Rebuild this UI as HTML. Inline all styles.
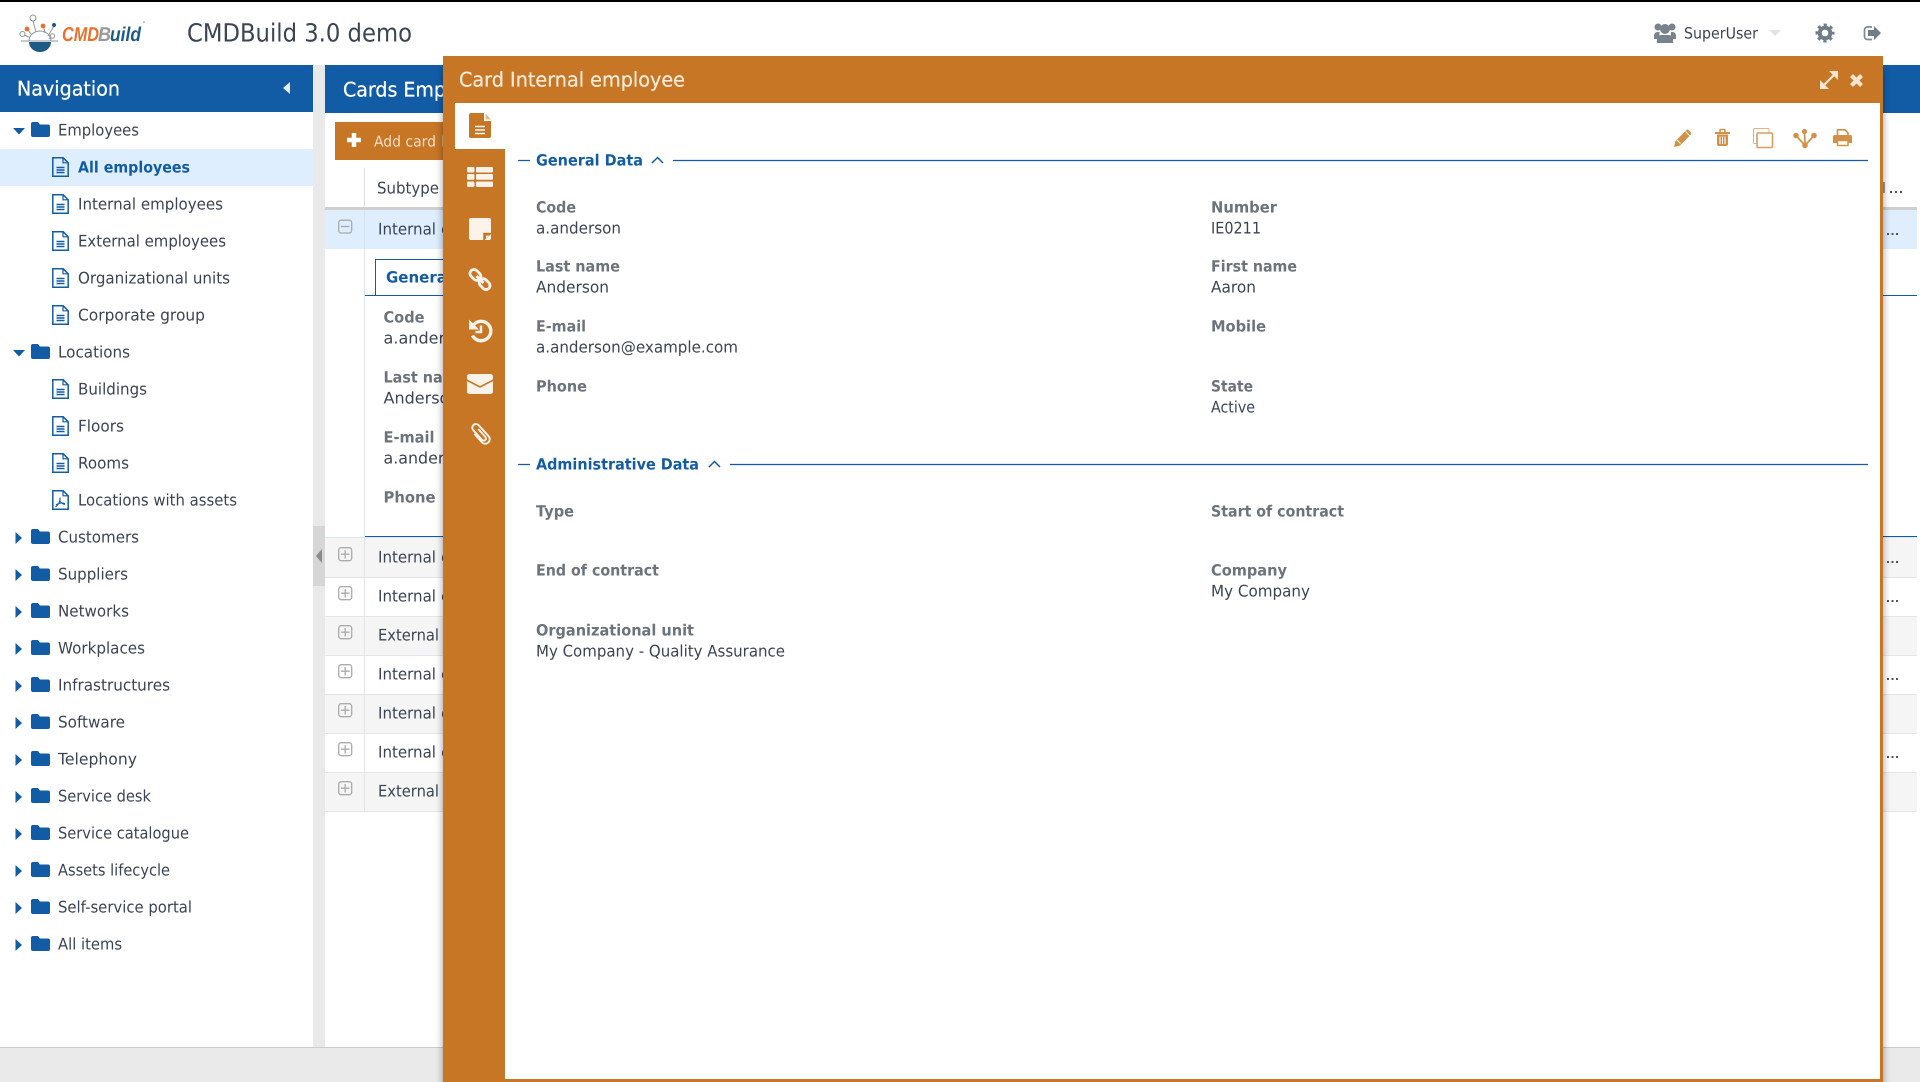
<!DOCTYPE html>
<html lang="en">
<head>
<meta charset="utf-8">
<title>CMDBuild 3.0 demo</title>
<style>
html,body{margin:0;padding:0;background:#fff;width:1920px;height:1082px;overflow:hidden}
svg{display:block}
text{font-family:"DejaVu Sans","Liberation Sans",sans-serif;text-rendering:geometricPrecision;white-space:pre;transform:translateY(-.7px)}
.n{font-size:16px;fill:#3b4452}
.b{font-size:15.5px;font-weight:700;fill:#6c737b}
.v{font-size:16px;fill:#3b4452}
.h{font-size:15.5px;font-weight:700;fill:#125ca5}
.t{font-size:20px;stroke-width:.25px}
</style>
</head>
<body>
<svg xmlns="http://www.w3.org/2000/svg" width="1920" height="1082" viewBox="0 0 1920 1082">
<defs>
<path id="folder" d="M0 2a2 2 0 0 1 2-2h5l2 2.5h8a2 2 0 0 1 2 2V13a2 2 0 0 1-2 2H2a2 2 0 0 1-2-2z" fill="#125ca5"/>
<g id="file" fill="none" stroke="#125ca5"><path d="M.8.8h10.4l5 5V19.2H.8z" stroke-width="1.5"/><path d="M11 .8v5h5" stroke-width="1.2"/><path d="M4.5 10.5h8M4.5 13h8M4.5 15.5h8" stroke-width="1.4"/></g>
<g id="pdf" fill="none" stroke="#125ca5"><path d="M.8.8h10.4l5 5V19.2H.8z" stroke-width="1.5"/><path d="M11 .8v5h5" stroke-width="1.2"/><path d="M8 7.5c.5 4-1.500 7-4.500 9.500M8 11c1 2 2.500 3 5 3.500M4 15c3-2 6-2.500 9-1.500" stroke-width="1.1"/></g>
<path id="tr" d="M0 0l6.500 6-6.500 6z" fill="#125ca5"/>
<g id="plus" fill="none" stroke="#aaa" stroke-width="1.3"><rect x=".7" y=".7" width="13" height="13" rx="2.500"/><path d="M3 7.200h8.500M7.200 3v8.500"/></g>
<filter id="sh" x="-2%" y="-2%" width="104%" height="104%"><feGaussianBlur stdDeviation="4"/></filter>
</defs>

<rect width="1920" height="1082" fill="#fff"/>
<rect width="1920" height="2" fill="#000"/>

<!-- logo -->
<g fill="none" stroke="#8e959b" stroke-width="1">
<path d="M21 41H58"/>
<path d="M36 32L33 21M31 34L28 30M29 37L24 35M45 33L44 28M48 36L54 26M49 39L51 37"/>
<circle cx="33" cy="18" r="3"/><circle cx="22.500" cy="34" r="2.500"/><circle cx="52.500" cy="36" r="2.200"/>
<path d="M29 41a11 10 0 0 1 22 0"/>
</g>
<path d="M29 42h22a11 10 0 0 1-22 0z" fill="#1d5a85"/>
<circle cx="27" cy="29" r="2.400" fill="#e8712e"/><circle cx="43" cy="26" r="2.400" fill="#e8712e"/><circle cx="54" cy="25" r="2" fill="#1d5a85"/>
<text x="62" y="41.700" textLength="37" lengthAdjust="spacingAndGlyphs" style="font-family:'Liberation Sans',sans-serif;font-size:20px;font-weight:700;font-style:italic;fill:#e8712e">CMD</text>
<text x="98" y="41.700" textLength="13" lengthAdjust="spacingAndGlyphs" style="font-family:'Liberation Sans',sans-serif;font-size:20px;font-weight:700;font-style:italic;fill:#999">B</text>
<text x="110" y="41.700" textLength="31" lengthAdjust="spacingAndGlyphs" style="font-family:'Liberation Sans',sans-serif;font-size:20px;font-weight:700;font-style:italic;fill:#1d5a85">uild</text>
<circle cx="144" cy="22" r="1" fill="#9fb6c6"/>

<text x="187" y="42" textLength="225" lengthAdjust="spacingAndGlyphs" style="font-size:25px;fill:#3b4452">CMDBuild 3.0 demo</text>

<!-- top-right -->
<g fill="#78838e">
<circle cx="1658" cy="27" r="3.500"/><circle cx="1672" cy="27" r="3.500"/>
<path d="M1654 39v-3.500a3.500 3.500 0 0 1 3.500-3.500h2v7zM1671 32h1.500a3.500 3.500 0 0 1 3.500 3.500V39h-5z"/>
<circle cx="1665" cy="29" r="5"/>
<path d="M1657 43v-5a5 5 0 0 1 5-3h6a5 5 0 0 1 5 3v5z"/>
</g>
<text x="1684" y="39" textLength="74" lengthAdjust="spacingAndGlyphs" class="n" style="font-size:15.500px">SuperUser</text>
<path d="M1769 30h12l-6 6z" fill="#e3e3e3"/>
<g fill="none" stroke="#6f7c89"><circle cx="1825" cy="33" r="5.300" stroke-width="4"/><circle cx="1825" cy="33" r="8" stroke-width="3" stroke-dasharray="3.100 3.183" stroke-dashoffset="1.550"/></g>
<path d="M1872 27h-4.500a3 3 0 0 0-3 3v6.500a3 3 0 0 0 3 3h4.500" fill="none" stroke="#7f8a95" stroke-width="1.700"/>
<path d="M1868 30h6v-4l7 7-7 7v-4h-6z" fill="#6f7c89"/>

<!-- gutter / footer -->
<rect x="313" y="65" width="12" height="982" fill="#e9e9e9"/>
<rect x="313" y="526" width="12" height="60" fill="#d6d6d6"/>
<path d="M322 549v14l-6-7z" fill="#8a8a8a"/>
<rect y="1047" width="1920" height="35" fill="#eaeaea"/>
<rect y="1047" width="1920" height="1" fill="#ccc"/>

<!-- navigation -->
<rect y="65" width="313" height="47" fill="#125ca5"/>
<text class="t" x="17" y="96" textLength="103" lengthAdjust="spacingAndGlyphs" style="fill:#fff;stroke:#fff">Navigation</text>
<path d="M290 82v12l-7-6z" fill="#e4edf6"/>
<rect y="149" width="313" height="37" fill="#deeeff"/>

<path d="M13 128h12l-6 6.500z" fill="#125ca5"/>
<use href="#folder" x="31" y="122"/>
<text class="n" x="58" y="136" textLength="81" lengthAdjust="spacingAndGlyphs">Employees</text>
<use href="#file" x="52" y="157"/>
<text x="78" y="173" textLength="112" lengthAdjust="spacingAndGlyphs" style="font-size:15.500px;font-weight:700;fill:#125ca5">All employees</text>
<use href="#file" x="52" y="194"/>
<text class="n" x="78" y="210" textLength="145" lengthAdjust="spacingAndGlyphs">Internal employees</text>
<use href="#file" x="52" y="231"/>
<text class="n" x="78" y="247" textLength="148" lengthAdjust="spacingAndGlyphs">External employees</text>
<use href="#file" x="52" y="268"/>
<text class="n" x="78" y="284" textLength="152" lengthAdjust="spacingAndGlyphs">Organizational units</text>
<use href="#file" x="52" y="305"/>
<text class="n" x="78" y="321" textLength="127" lengthAdjust="spacingAndGlyphs">Corporate group</text>
<path d="M13 350h12l-6 6.500z" fill="#125ca5"/>
<use href="#folder" x="31" y="344"/>
<text class="n" x="58" y="358" textLength="72" lengthAdjust="spacingAndGlyphs">Locations</text>
<use href="#file" x="52" y="379"/>
<text class="n" x="78" y="395" textLength="69" lengthAdjust="spacingAndGlyphs">Buildings</text>
<use href="#file" x="52" y="416"/>
<text class="n" x="78" y="432" textLength="46" lengthAdjust="spacingAndGlyphs">Floors</text>
<use href="#file" x="52" y="453"/>
<text class="n" x="78" y="469" textLength="51" lengthAdjust="spacingAndGlyphs">Rooms</text>
<use href="#pdf" x="52" y="490"/>
<text class="n" x="78" y="506" textLength="159" lengthAdjust="spacingAndGlyphs">Locations with assets</text>

<use href="#tr" x="15.500" y="532"/><use href="#folder" x="31" y="529"/>
<text class="n" x="58" y="543" textLength="81" lengthAdjust="spacingAndGlyphs">Customers</text>
<use href="#tr" x="15.500" y="569"/><use href="#folder" x="31" y="566"/>
<text class="n" x="58" y="580" textLength="70" lengthAdjust="spacingAndGlyphs">Suppliers</text>
<use href="#tr" x="15.500" y="606"/><use href="#folder" x="31" y="603"/>
<text class="n" x="58" y="617" textLength="71" lengthAdjust="spacingAndGlyphs">Networks</text>
<use href="#tr" x="15.500" y="643"/><use href="#folder" x="31" y="640"/>
<text class="n" x="58" y="654" textLength="87" lengthAdjust="spacingAndGlyphs">Workplaces</text>
<use href="#tr" x="15.500" y="680"/><use href="#folder" x="31" y="677"/>
<text class="n" x="58" y="691" textLength="112" lengthAdjust="spacingAndGlyphs">Infrastructures</text>
<use href="#tr" x="15.500" y="717"/><use href="#folder" x="31" y="714"/>
<text class="n" x="58" y="728" textLength="67" lengthAdjust="spacingAndGlyphs">Software</text>
<use href="#tr" x="15.500" y="754"/><use href="#folder" x="31" y="751"/>
<text class="n" x="58" y="765" textLength="79" lengthAdjust="spacingAndGlyphs">Telephony</text>
<use href="#tr" x="15.500" y="791"/><use href="#folder" x="31" y="788"/>
<text class="n" x="58" y="802" textLength="93" lengthAdjust="spacingAndGlyphs">Service desk</text>
<use href="#tr" x="15.500" y="828"/><use href="#folder" x="31" y="825"/>
<text class="n" x="58" y="839" textLength="131" lengthAdjust="spacingAndGlyphs">Service catalogue</text>
<use href="#tr" x="15.500" y="865"/><use href="#folder" x="31" y="862"/>
<text class="n" x="58" y="876" textLength="112" lengthAdjust="spacingAndGlyphs">Assets lifecycle</text>
<use href="#tr" x="15.500" y="902"/><use href="#folder" x="31" y="899"/>
<text class="n" x="58" y="913" textLength="134" lengthAdjust="spacingAndGlyphs">Self-service portal</text>
<use href="#tr" x="15.500" y="939"/><use href="#folder" x="31" y="936"/>
<text class="n" x="58" y="950" textLength="64" lengthAdjust="spacingAndGlyphs">All items</text>

<!-- cards panel (behind modal) -->
<rect x="325" y="65" width="1595" height="48" fill="#125ca5"/>
<text class="t" x="343" y="97" textLength="103" lengthAdjust="spacingAndGlyphs" style="fill:#fff;stroke:#fff">Cards Emp</text>
<rect x="335" y="122" width="120" height="38" fill="#c77625"/>
<path d="M354 133v14M347 140h14" stroke="#fff" stroke-width="4.500" fill="none"/>
<text x="374" y="147" textLength="62" lengthAdjust="spacingAndGlyphs" style="font-size:15px;fill:#f6dfc6">Add card</text>
<text x="441" y="147" style="font-size:15px;fill:#f6dfc6">I</text>
<rect x="364" y="168" width="1" height="39" fill="#ddd"/>
<text class="n" x="377" y="194" textLength="62" lengthAdjust="spacingAndGlyphs">Subtype</text>
<rect x="325" y="207" width="1592" height="3" fill="#cfcfcf"/>
<rect x="325" y="210" width="1592" height="39" fill="#deeeff"/>
<rect x="364" y="249" width="1" height="287" fill="#e5e5e5"/>
<rect x="364" y="210" width="1" height="39" fill="#d5e2ef"/>
<g fill="none" stroke="#aaa" stroke-width="1.300"><rect x="338.700" y="220.200" width="13" height="12.800" rx="2.500"/><path d="M341 226.500h8.500"/></g>
<text class="n" x="378" y="235" textLength="58" lengthAdjust="spacingAndGlyphs">Internal</text><text class="n" x="441" y="235">e</text>
<rect x="365" y="295" width="1552" height="1" fill="#125ca5"/>
<path d="M375.500 295V259.500H450" fill="none" stroke="#125ca5"/>
<text class="h" x="386" y="283" textLength="66" lengthAdjust="spacingAndGlyphs">General</text>
<text class="b" x="383.500" y="323" textLength="41" lengthAdjust="spacingAndGlyphs">Code</text>
<text class="v" x="383.500" y="344" textLength="90" lengthAdjust="spacingAndGlyphs">a.anderson</text>
<text class="b" x="383.500" y="383" textLength="84" lengthAdjust="spacingAndGlyphs">Last name</text>
<text class="v" x="383.500" y="404" textLength="76" lengthAdjust="spacingAndGlyphs">Anderson</text>
<text class="b" x="383.500" y="443" textLength="51" lengthAdjust="spacingAndGlyphs">E-mail</text>
<text class="v" x="383.500" y="464" textLength="212" lengthAdjust="spacingAndGlyphs">a.anderson@example.com</text>
<text class="b" x="383.500" y="503" textLength="52" lengthAdjust="spacingAndGlyphs">Phone</text>
<rect x="365" y="536" width="1552" height="1" fill="#125ca5"/>
<rect x="325" y="537" width="1592" height="1" fill="#d8e8f5"/>

<rect x="325" y="538" width="1592" height="39" fill="#f5f5f5"/>
<rect x="325" y="616" width="1592" height="39" fill="#f5f5f5"/>
<rect x="325" y="694" width="1592" height="39" fill="#f5f5f5"/>
<rect x="325" y="772" width="1592" height="39" fill="#f5f5f5"/>
<g fill="#e5e5e5">
<rect x="325" y="577" width="1592" height="1"/><rect x="325" y="616" width="1592" height="1"/><rect x="325" y="655" width="1592" height="1"/><rect x="325" y="694" width="1592" height="1"/><rect x="325" y="733" width="1592" height="1"/><rect x="325" y="772" width="1592" height="1"/><rect x="325" y="811" width="1592" height="1"/>
<rect x="364" y="538" width="1" height="273"/>
</g>
<use href="#plus" x="338" y="547"/><use href="#plus" x="338" y="586"/><use href="#plus" x="338" y="625"/><use href="#plus" x="338" y="664"/><use href="#plus" x="338" y="703"/><use href="#plus" x="338" y="742"/><use href="#plus" x="338" y="781"/>
<text class="n" x="378" y="563" textLength="58" lengthAdjust="spacingAndGlyphs">Internal</text><text class="n" x="441" y="563">e</text>
<text class="n" x="378" y="602" textLength="58" lengthAdjust="spacingAndGlyphs">Internal</text><text class="n" x="441" y="602">e</text>
<text class="n" x="378" y="641" textLength="61" lengthAdjust="spacingAndGlyphs">External</text>
<text class="n" x="378" y="680" textLength="58" lengthAdjust="spacingAndGlyphs">Internal</text><text class="n" x="441" y="680">e</text>
<text class="n" x="378" y="719" textLength="58" lengthAdjust="spacingAndGlyphs">Internal</text><text class="n" x="441" y="719">e</text>
<text class="n" x="378" y="758" textLength="58" lengthAdjust="spacingAndGlyphs">Internal</text><text class="n" x="441" y="758">e</text>
<text class="n" x="378" y="797" textLength="61" lengthAdjust="spacingAndGlyphs">External</text>

<!-- right-edge dots -->
<g fill="#555">
<rect x="1890" y="191" width="2" height="2"/><rect x="1895" y="191" width="2" height="2"/><rect x="1900" y="191" width="2" height="2"/>
<rect x="1887" y="233" width="2" height="2"/><rect x="1891.500" y="233" width="2" height="2"/><rect x="1896" y="233" width="2" height="2"/>
<rect x="1887" y="561" width="2" height="2"/><rect x="1891.500" y="561" width="2" height="2"/><rect x="1896" y="561" width="2" height="2"/>
<rect x="1887" y="600" width="2" height="2"/><rect x="1891.500" y="600" width="2" height="2"/><rect x="1896" y="600" width="2" height="2"/>
<rect x="1887" y="678" width="2" height="2"/><rect x="1891.500" y="678" width="2" height="2"/><rect x="1896" y="678" width="2" height="2"/>
<rect x="1887" y="756" width="2" height="2"/><rect x="1891.500" y="756" width="2" height="2"/><rect x="1896" y="756" width="2" height="2"/>
</g>
<rect x="1883" y="182" width="2" height="11" fill="#999"/>

<!-- modal -->
<rect x="443" y="70" width="1440" height="1040" fill="#000" opacity=".4" filter="url(#sh)"/>
<rect x="443" y="56" width="1440" height="1026" fill="#c77625"/>
<rect x="505" y="103" width="1375" height="976" fill="#fff"/>
<rect x="455" y="103" width="50" height="46" fill="#fff"/>
<text class="t" x="459" y="87" textLength="226" lengthAdjust="spacingAndGlyphs" style="fill:#f9ead9;stroke:#f9ead9">Card Internal employee</text>

<!-- modal title icons -->
<g fill="#f8e6d2">
<path d="M1829 71h9v9z"/><path d="M1820 80v9h9z"/>
</g>
<path d="M1824 85l10-10" stroke="#f8e6d2" stroke-width="2.200" fill="none"/>
<path d="M1851.500 75.500l10 10M1861.500 75.500l-10 10" stroke="#f8e6d2" stroke-width="4.200" fill="none"/>

<!-- tab icons -->
<path d="M469 115a2 2 0 0 1 2-2h13v8h7v15a2 2 0 0 1-2 2h-18a2 2 0 0 1-2-2z" fill="#c77625"/>
<path d="M485.500 113.500l5.500 6h-5.500z" fill="#e6b885"/>
<path d="M475 126.500h10M475 130h10M475 133.500h10" stroke="#fff" stroke-width="1.500" fill="none"/>
<g fill="#fbf3ea">
<rect x="467" y="167" width="7.500" height="5.500" rx="1.200"/><rect x="476" y="167" width="17" height="5.500" rx="1.200"/>
<rect x="467" y="174" width="7.500" height="5.800" rx="1.200"/><rect x="476" y="174" width="17" height="5.800" rx="1.200"/>
<rect x="467" y="181.500" width="7.500" height="5.500" rx="1.200"/><rect x="476" y="181.500" width="17" height="5.500" rx="1.200"/>
<path d="M469 220a2 2 0 0 1 2-2h18a2 2 0 0 1 2 2v18a2 2 0 0 1-2 2h-18a2 2 0 0 1-2-2z"/>
<path d="M467 376.500a2.500 2.500 0 0 1 2.500-2.500h21a2.500 2.500 0 0 1 2.500 2.500v15a2.500 2.500 0 0 1-2.500 2.500h-21a2.500 2.500 0 0 1-2.500-2.500z"/>
<path d="M469 319.500v10h10z"/>
</g>
<path d="M484 240.500v-7h7.500" fill="#c77625" stroke="#c77625" stroke-width="1.500"/>
<path d="M486 238.500v-3h3z" fill="#fbf3ea"/>
<path d="M466.500 380l13.500 7 13.500-7" fill="none" stroke="#c77625" stroke-width="1.600"/>
<g fill="none" stroke="#fbf3ea">
<g transform="translate(480 279.500) rotate(45)" stroke-width="2.800"><rect x="-12.500" y="-4" width="12" height="8" rx="4"/><rect x=".5" y="-4" width="12" height="8" rx="4"/><path d="M-5 0H5"/></g>
<path d="M473.500 325a9.700 9.700 0 1 1-1 10.500" stroke-width="3.400"/>
<path d="M481 325.500v6.500h-5.500" stroke-width="2.500"/>
<g transform="translate(480 434) rotate(-42) scale(.82)" stroke-width="2.300"><path d="M2.500-6V7a2.700 2.700 0 0 1-5.500 0V-9a4.500 4.500 0 0 1 9 0V9a5.500 5.500 0 0 1-11 0V-5"/></g>
</g>

<!-- toolbar icons -->
<g fill="#d39148">
<path d="M1674 147l1.500-6 11-11a1.500 1.500 0 0 1 2 0l2.500 2.500a1.500 1.500 0 0 1 0 2l-11 11z"/>
<rect x="1715" y="132" width="15" height="2"/>
<path d="M1717 134.500h11V144a2 2 0 0 1-2 2h-7a2 2 0 0 1-2-2z"/>
<path d="M1833 137a2 2 0 0 1 2-2h15a2 2 0 0 1 2 2v6h-19z"/>
<circle cx="1804.500" cy="131.500" r="2.600"/><circle cx="1796" cy="135.500" r="2.800"/><circle cx="1814" cy="135.500" r="2.800"/><circle cx="1805" cy="145.500" r="2.800"/>
</g>
<g fill="none" stroke="#d39148">
<path d="M1720 132v-1.500a1 1 0 0 1 1-1h3a1 1 0 0 1 1 1V132" stroke-width="1.500"/>
<path d="M1796 135.500l9 10 9-10M1804.500 131.500l.5 14" stroke-width="1.700"/>
<path d="M1837.500 135v-5.200h7.500l3 3V135" stroke-width="1.600"/>
</g>
<path d="M1685.500 131.500l4.500 4.500M1677 140l3.500 3.500" stroke="#fff" stroke-width="1" fill="none"/>
<path d="M1720 136.500v7.500M1722.500 136.500v7.500M1725 136.500v7.500" stroke="#fff" stroke-width="1" fill="none"/>
<rect x="1837.500" y="140.500" width="10.500" height="5" fill="#fff" stroke="#d39148" stroke-width="1.500"/>
<rect x="1753.500" y="128.500" width="15.500" height="15" rx="1" fill="none" stroke="#e0b283" stroke-width="1"/>
<rect x="1757" y="133" width="15.500" height="14.500" rx="1" fill="#fff" stroke="#d99f60" stroke-width="1.600"/>

<!-- general data -->
<path d="M518 160.500h12M673 160.500H1868" stroke="#125ca5" stroke-width="1.300" fill="none"/>
<text class="h" x="536" y="166" textLength="107" lengthAdjust="spacingAndGlyphs">General Data</text>
<path d="M652 163l5.500-5.500 5.500 5.500" stroke="#125ca5" stroke-width="1.500" fill="none"/>
<text class="b" x="536" y="213" textLength="40" lengthAdjust="spacingAndGlyphs">Code</text>
<text class="v" x="536" y="234" textLength="85" lengthAdjust="spacingAndGlyphs">a.anderson</text>
<text class="b" x="1211" y="213" textLength="66" lengthAdjust="spacingAndGlyphs">Number</text>
<text class="v" x="1211" y="234" textLength="50" lengthAdjust="spacingAndGlyphs">IE0211</text>
<text class="b" x="536" y="272" textLength="84" lengthAdjust="spacingAndGlyphs">Last name</text>
<text class="v" x="536" y="293" textLength="73" lengthAdjust="spacingAndGlyphs">Anderson</text>
<text class="b" x="1211" y="272" textLength="86" lengthAdjust="spacingAndGlyphs">First name</text>
<text class="v" x="1211" y="293" textLength="45" lengthAdjust="spacingAndGlyphs">Aaron</text>
<text class="b" x="536" y="332" textLength="50" lengthAdjust="spacingAndGlyphs">E-mail</text>
<text class="v" x="536" y="353" textLength="202" lengthAdjust="spacingAndGlyphs">a.anderson@example.com</text>
<text class="b" x="1211" y="332" textLength="55" lengthAdjust="spacingAndGlyphs">Mobile</text>
<text class="b" x="536" y="392" textLength="51" lengthAdjust="spacingAndGlyphs">Phone</text>
<text class="b" x="1211" y="392" textLength="42" lengthAdjust="spacingAndGlyphs">State</text>
<text class="v" x="1211" y="413" textLength="44" lengthAdjust="spacingAndGlyphs">Active</text>

<!-- administrative data -->
<path d="M518 464.500h12M730 464.500H1868" stroke="#125ca5" stroke-width="1.300" fill="none"/>
<text class="h" x="536" y="470" textLength="163" lengthAdjust="spacingAndGlyphs">Administrative Data</text>
<path d="M709 467l5.500-5.500 5.500 5.500" stroke="#125ca5" stroke-width="1.500" fill="none"/>
<text class="b" x="536" y="517" textLength="38" lengthAdjust="spacingAndGlyphs">Type</text>
<text class="b" x="1211" y="517" textLength="133" lengthAdjust="spacingAndGlyphs">Start of contract</text>
<text class="b" x="536" y="576" textLength="123" lengthAdjust="spacingAndGlyphs">End of contract</text>
<text class="b" x="1211" y="576" textLength="76" lengthAdjust="spacingAndGlyphs">Company</text>
<text class="v" x="1211" y="597" textLength="99" lengthAdjust="spacingAndGlyphs">My Company</text>
<text class="b" x="536" y="636" textLength="158" lengthAdjust="spacingAndGlyphs">Organizational unit</text>
<text class="v" x="536" y="657" textLength="249" lengthAdjust="spacingAndGlyphs">My Company - Quality Assurance</text>
</svg>
</body>
</html>
